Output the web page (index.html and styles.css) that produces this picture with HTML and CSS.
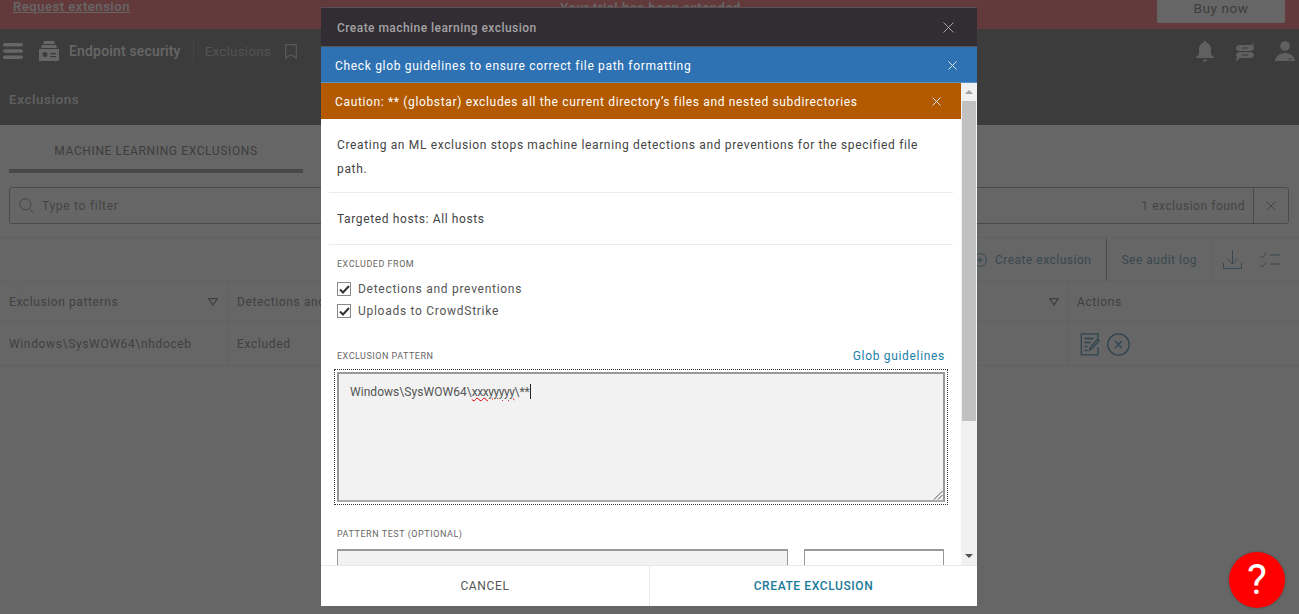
FILE: index.html
```html
<!DOCTYPE html>
<html lang="en">
<head>
<meta charset="utf-8">
<title>Exclusions</title>
<link rel="stylesheet" href="styles.css">
</head>
<body>
<div class="page">
  <div class="banner">
    <a class="banner-link">Request extension</a>
    <span class="banner-msg">Your trial has been extended</span>
    <button class="buy">Buy now</button>
  </div>
  <header class="topbar">
    <svg class="ico-menu" width="20" height="16" viewBox="0 0 20 16"><rect x="0" y="0" width="20" height="3.6" rx="1.8"/><rect x="0" y="6.2" width="20" height="3.6" rx="1.8"/><rect x="0" y="12.4" width="20" height="3.6" rx="1.8"/></svg>
    <svg class="ico-logo" width="20" height="20" viewBox="0 0 20 20"><path d="M5 0h10l1 3H4zM3 4h14l1 3H2z"/><path fill-rule="evenodd" d="M0 8h20v12H0zM6 11a2.5 2.5 0 1 0 0 5 2.5 2.5 0 0 0 0-5zm5 1v1.2h6V12zm0 3v1.2h6V15z"/></svg>
    <span class="product">Endpoint security</span>
    <span class="crumb">Exclusions</span>
    <svg class="ico-mark" width="12" height="15" viewBox="0 0 12 15"><path d="M.7.7h10.6v13.4L6 10.8.7 14.1z" fill="none" stroke="currentColor" stroke-width="1.2"/></svg>
    <span class="spacer"></span>
    <svg class="ico-top" width="18" height="21" viewBox="0 0 18 21"><path d="M9 0c1 0 1.500.7 1.500 1.600C13.500 2.400 15 5 15 8v4c0 1.500 1.500 3 3 4v1H0v-1c1.500-1 3-2.500 3-4V8c0-3 1.500-5.600 4.500-6.400C7.500.7 8 0 9 0zM7 18.500h4c0 1.300-.9 2.300-2 2.300s-2-1-2-2.300z"/></svg>
    <svg class="ico-top" width="18" height="20" viewBox="0 0 18 20"><path d="M18 0c-.5 2-1.500 3.500-3 4H4C2 4 0 5 0 7s2 3 4 3h10c2 0 4-1 4-3 0-1-.5-1.800-1-2.300C17.500 3.500 18 2 18 0zM4 11c-2 0-4 1-4 3 0 1 .5 1.800 1 2.300C.5 17.500 0 19 0 20c1.500-.3 3-1.500 3.500-3H14c2 0 4-1 4-3s-2-3-4-3zM6 6.500h6v1H6zM6 13.500h6v1H6z" fill-rule="evenodd"/></svg>
    <svg class="ico-top ico-user" width="20" height="20" viewBox="0 0 20 20"><circle cx="10" cy="5" r="4.800"/><path fill-rule="evenodd" d="M0 20c.5-4 4-8 10-8s9.500 4 10 8zM13 17.500v1h4v-1z"/></svg>
  </header>
  <div class="titlebar">Exclusions</div>
  <nav class="tabs"><span class="tab">MACHINE LEARNING EXCLUSIONS</span></nav>
  <div class="filter-wrap">
    <div class="filter">
      <svg class="ico-search" width="15" height="16" viewBox="0 0 15 16"><circle cx="6.300" cy="6.300" r="5.500" fill="none" stroke="currentColor" stroke-width="1"/><path d="M10.300 10.500l4.300 5" stroke="currentColor" stroke-width="1" fill="none"/></svg>
      <span class="filter-ph">Type to filter</span>
      <span class="filter-count">1 exclusion found</span>
      <span class="filter-clear"><svg width="10" height="10" viewBox="0 0 10 10"><path d="M.5.500l9 9m0-9l-9 9" stroke="currentColor" fill="none"/></svg></span>
    </div>
  </div>
  <div class="toolbar">
    <span class="tool tool-create"><svg width="14" height="14" viewBox="0 0 14 14"><circle cx="7" cy="7" r="6.400" fill="none" stroke="currentColor"/><path d="M4 7h6M7 4v6" stroke="currentColor" fill="none"/></svg>Create exclusion</span>
    <span class="tool tool-audit">See audit log</span>
    <span class="tool tool-ico"><svg width="19" height="20" viewBox="0 0 19 20"><path d="M9.500 0v14M4.500 9l5 5 5-5M.5 13v5.500h18V13" fill="none" stroke="currentColor"/></svg></span>
    <span class="tool tool-ico2"><svg width="20" height="16" viewBox="0 0 20 16"><path d="M.5 4l2 2L6.500.5M.5 13l2 2 4-5M10 3h10M10 12h10" fill="none" stroke="currentColor"/></svg></span>
  </div>
  <div class="table">
    <div class="row head">
      <div class="cell c1">Exclusion patterns<svg class="tri" width="10" height="8" viewBox="0 0 10 8"><path d="M.7.700h8.600L5 7z" fill="none" stroke="currentColor" stroke-width="1.300"/></svg></div>
      <div class="cell c2">Detections and</div>
      <div class="cell c3"><svg class="tri" width="10" height="8" viewBox="0 0 10 8"><path d="M.7.700h8.600L5 7z" fill="none" stroke="currentColor" stroke-width="1.300"/></svg></div>
      <div class="cell c4">Actions</div>
    </div>
    <div class="row body-row">
      <div class="cell c1">Windows\SysWOW64\nhdoceb</div>
      <div class="cell c2">Excluded</div>
      <div class="cell c3"></div>
      <div class="cell c4 actions">
        <svg width="20" height="23" viewBox="0 0 19 23"><path d="M17.500 7V.8H.8v21h16.700V14M4 5.500h9M4 9.500h6M4 13.500h3M4 17.500h3M9 17l1-3 7-7.500 1.500 1.500-7 7.500z" fill="none" stroke="currentColor" stroke-width="1.300"/></svg>
        <svg width="23" height="23" viewBox="0 0 23 23"><circle cx="11.500" cy="11.500" r="10.700" fill="none" stroke="currentColor" stroke-width="1.300"/><path d="M8 8l7 7m0-7l-7 7" fill="none" stroke="currentColor" stroke-width="1.300"/></svg>
      </div>
    </div>
  </div>
</div>

<div class="overlay"></div>

<section class="modal">
  <div class="modal-title"><span>Create machine learning exclusion</span>
    <svg width="11" height="11" viewBox="0 0 11 11"><path d="M.5.500l10 10m0-10l-10 10" stroke="currentColor" fill="none"/></svg>
  </div>
  <div class="alert alert-blue"><span>Check glob guidelines to ensure correct file path formatting</span>
    <svg width="9" height="9" viewBox="0 0 9 9"><path d="M.5.500l8 8m0-8l-8 8" stroke="currentColor" fill="none"/></svg>
  </div>
  <div class="modal-mid">
    <div class="modal-scroll">
      <div class="alert alert-orange"><span>Caution: ** (globstar) excludes all the current directory’s files and nested subdirectories</span>
        <svg width="9" height="9" viewBox="0 0 9 9"><path d="M.5.500l8 8m0-8l-8 8" stroke="currentColor" fill="none"/></svg>
      </div>
      <div class="content">
        <p class="intro">Creating an ML exclusion stops machine learning detections and preventions for the specified file path.</p>
        <p class="hosts">Targeted hosts: All hosts</p>
        <div class="form">
          <div class="label l-excl">EXCLUDED FROM</div>
          <label class="check"><span class="box"><svg width="11" height="9" viewBox="0 0 11 9"><path d="M1 4.500l3 3 6-6.500" fill="none" stroke="currentColor" stroke-width="2"/></svg></span>Detections and preventions</label>
          <label class="check"><span class="box"><svg width="11" height="9" viewBox="0 0 11 9"><path d="M1 4.500l3 3 6-6.500" fill="none" stroke="currentColor" stroke-width="2"/></svg></span>Uploads to CrowdStrike</label>
          <div class="label-row"><span class="label">EXCLUSION PATTERN</span><a class="glob">Glob guidelines</a></div>
          <div class="focus">
            <div class="textarea">Windows\SysWOW64\<span class="typo">xxxyyyyy</span>\**<span class="caret"></span>
              <svg class="grip" width="10" height="10" viewBox="0 0 10 10"><path d="M9.500 1L1 9.500M9.500 5L5 9.500" stroke="#555" fill="none"/></svg>
            </div>
          </div>
          <div class="label l-test">PATTERN TEST (OPTIONAL)</div>
          <div class="test-row"><div class="test-input"></div><div class="test-btn"></div></div>
        </div>
      </div>
    </div>
    <div class="scrollbar">
      <span class="arrow up"></span>
      <span class="thumb"></span>
      <span class="arrow down"></span>
    </div>
  </div>
  <div class="modal-foot">
    <button class="foot-btn cancel">CANCEL</button>
    <button class="foot-btn create">CREATE EXCLUSION</button>
  </div>
</section>

<button class="help">?</button>
</body>
</html>
```
FILE: styles.css
```css
* { box-sizing: border-box; }
html, body { margin: 0; height: 614px; overflow: hidden; }
body { font-family: Roboto, "Liberation Sans", sans-serif; font-size: 13px; letter-spacing: .55px; background: #fff; color: #9a9a9a; position: relative; }
button { font-family: inherit; letter-spacing: inherit; }

.page { height: 614px; display: flex; flex-direction: column; }

.banner { height: 29px; flex: none; background: #f89193; display: flex; justify-content: space-between; padding: 0 14px 0 13px; }
.banner-link { font-weight: 500; text-decoration: underline; line-height: 14px; color: #fff; }
.banner-msg { line-height: 15px; color: #fff; margin-left: 14px; font-size: 13px; font-weight: 500; }
.buy { width: 128px; height: 23px; border: 0; border-radius: 0 0 2px 2px; background: #fff; color: #999; font-size: 13.5px; line-height: 14px; padding: 0 0 8px; }

.topbar { height: 44px; flex: none; background: #969696; display: flex; align-items: center; padding: 0 4px 0 3px; color: #fff; fill: #eee; }
.ico-menu { fill: #fff; margin-right: 16px; }
.ico-logo { fill: #fff; margin-right: 10px; }
.product { font-weight: 500; font-size: 14px; letter-spacing: .17px; color: #fff; padding-right: 12px; border-right: 1px solid #b0b0b0; line-height: 22px; }
.crumb { color: #cfcfcf; margin-left: 11px; font-size: 13.5px; letter-spacing: .2px; }
.ico-mark { color: #ddd; margin-left: 14px; }
.spacer { flex: 1; }
.ico-top { fill: #f0f0f0; margin-left: 22px; flex: none; }
.ico-user { margin-left: 21px; }

.titlebar { height: 52px; flex: none; background: #969696; padding: 0 9px 0; font-size: 13.5px; color: #f0f0f0; line-height: 53px; font-weight: 500; }

.tabs { height: 48px; flex: none; background: #fff; padding-left: 9px; }
.tab { display: block; width: 294px; height: 48px; border-bottom: 4px solid #b5b5b5; text-align: center; font-size: 12px; letter-spacing: .62px; line-height: 53px; color: #9a9a9a; }

.filter-wrap { height: 65px; flex: none; padding: 14px 10px 0 9px; border-bottom: 1px solid #f0f0f0; }
.filter { height: 37px; border: 1px solid #bbb; border-radius: 3px; display: flex; align-items: center; padding-left: 9px; }
.ico-search { color: #aaa; }
.filter-ph { margin-left: 8px; color: #aaa; font-size: 12px; letter-spacing: .72px; flex: 1; }
.filter-count { color: #aaa; font-size: 12px; letter-spacing: .55px; padding-right: 8px; }
.filter-clear { width: 35px; height: 35px; border-left: 1px solid #bbb; display: flex; align-items: center; justify-content: center; color: #aaa; }

.toolbar { height: 44px; flex: none; display: flex; justify-content: flex-end; align-items: stretch; font-size: 12px; letter-spacing: .5px; color: #8fb4c8; padding-right: 19px; font-weight: 400; border-bottom: 1px solid #f0f0f0; }
.tool { display: flex; align-items: center; }
.tool-create { gap: 8px; padding-right: 15px; border-right: 1px solid #bcbcbc; }
.tool-audit { padding: 0 15px 0 14px; border-right: 1px solid #eee; }
.tool-ico { padding: 0 10px 0 10px; }
.tool-ico2 { padding: 0 0 0 8px; }

.table { flex: none; position: relative; }
.table::before { content: ""; position: absolute; left: 10px; top: -8px; width: 14px; height: 14px; background: #fff; border-right: 1px solid #f0f0f0; border-bottom: 1px solid #f0f0f0; transform: rotate(45deg); clip-path: polygon(100% 0, 100% 100%, 0 100%); }
.row { display: grid; grid-template-columns: 228px 840px 1fr; border-bottom: 1px solid #f0f0f0; }
.row.head { height: 40px; font-weight: 400; font-size: 12px; letter-spacing: .6px; }
.row.body-row { height: 44px; font-size: 12px; letter-spacing: .65px; }
.cell { display: flex; align-items: center; justify-content: space-between; padding: 0 9px 0 9px; border-right: 1px solid #f0f0f0; color: #a2a2a2; }
.body-row .cell { padding-top: 1px; }
.row .c2 { grid-column: 2; grid-row: 1; border-right: 0; justify-content: flex-start; }
.row .c3 { grid-column: 2; grid-row: 1; justify-content: flex-end; padding-right: 8px; }
.row .c4 { grid-column: 3; border-right: 0; justify-content: flex-start; }
.tri { color: #a0a0a0; flex: none; }
.actions { gap: 7px; color: #75a9c4; padding-left: 12px; }

.overlay { position: absolute; inset: 0; background: rgba(0,0,0,.6); }

.modal { position: absolute; left: 321px; top: 7px; width: 656px; height: 599px; background: #fff; display: flex; flex-direction: column; }
.modal-title { height: 40px; flex: none; background: #322d33; color: #a3a3a3; display: flex; align-items: center; justify-content: space-between; padding: 1px 23px 0 16px; font-size: 12px; font-weight: 500; letter-spacing: .45px; border-top: 1px solid #5a5058; border-bottom: 1px solid #555; }
.alert { display: flex; align-items: center; justify-content: space-between; flex: none; color: #fff; font-size: 12px; letter-spacing: .68px; font-weight: 400; }
.alert-blue { height: 36px; background: #2e72b3; padding: 2px 20px 0 14px; border-bottom: 1px solid #5a93c8; }
.alert-orange { height: 36px; background: #b35900; padding: 1px 20px 0 14px; letter-spacing: .65px; }
.alert svg { color: #d9e3ee; }

.modal-mid { flex: 1; min-height: 0; display: flex; }
.modal-scroll { flex: 1; min-width: 0; overflow: hidden; }
.content { padding: 0 8px; color: #555; }
.intro { margin: 0; padding: 14px 8px 11px; line-height: 24px; font-size: 12px; letter-spacing: .65px; border-bottom: 1px solid #eaeaea; color: #444; }
.hosts { margin: 0; padding: 16px 8px 14px; line-height: 21px; font-size: 12px; letter-spacing: .62px; border-bottom: 1px solid #eaeaea; color: #444; }
.form { padding: 0 8px; }
.label { font-size: 9px; letter-spacing: .5px; color: #666; line-height: 12px; }
.l-excl { margin-top: 13px; margin-bottom: 8px; }
.check { display: flex; align-items: center; height: 22px; font-size: 12px; letter-spacing: .72px; color: #555; }
.box { width: 14px; height: 14px; border: 1px solid #888; margin-right: 7px; display: flex; align-items: center; justify-content: center; color: #333; }
.label-row { display: flex; justify-content: space-between; align-items: center; margin-top: 26px; height: 16px; }
.glob { color: #1b7fa8; font-size: 12px; letter-spacing: .68px; }
.focus { margin: 5px -3px 0; padding: 2px; border: 1px dotted #333; }
.textarea { position: relative; height: 130px; border: 2px solid #999; border-bottom-color: #aaa; background: #f2f2f2; padding: 10px 11px; font-size: 12px; letter-spacing: .05px; line-height: 16px; color: #555; }
.typo { text-decoration: underline wavy #e00000 1px; letter-spacing: -.45px; }
.caret { display: inline-block; width: 1px; height: 15px; background: #222; vertical-align: -3px; }
.grip { position: absolute; right: 0; bottom: 0; }
.l-test { margin-top: 23px; letter-spacing: .55px; }
.test-row { display: flex; gap: 16px; margin-top: 9px; }
.test-input { width: 451px; height: 40px; border: 1px solid #999; border-top-width: 2px; background: #f2f2f2; }
.test-btn { width: 140px; height: 40px; border: 1px solid #999; border-top-width: 2px; background: #fff; }

.scrollbar { width: 16px; flex: none; background: #f1f1f1; position: relative; display: flex; flex-direction: column; align-items: center; }
.thumb { display: block; width: 14px; height: 320px; background: #c1c1c1; margin-top: 1px; }
.arrow { display: block; width: 0; height: 0; border-left: 4px solid transparent; border-right: 4px solid transparent; }
.arrow.up { border-bottom: 4px solid #a3a3a3; margin-top: 7px; margin-bottom: 6px; }
.arrow.down { border-top: 4px solid #505050; margin-top: 133px; }

.modal-foot { height: 41px; flex: none; display: flex; border-top: 1px solid #e9e9e9; background: #fff; }
.foot-btn { border: 0; background: #fff; font-size: 12px; padding: 0; }
.cancel { width: 329px; border-right: 1px solid #e9e9e9; color: #555; letter-spacing: .65px; }
.create { flex: 1; color: #197a9a; letter-spacing: .6px; font-weight: 500; }

.help { position: absolute; left: 1229px; top: 552px; width: 56px; height: 56px; border: 0; border-radius: 50%; background: #f00; color: #fff; font-family: Roboto, sans-serif; font-size: 42px; font-weight: 400; line-height: 56px; padding: 0; letter-spacing: 0; box-shadow: 0 0 3px rgba(0,0,0,.25); }
```
